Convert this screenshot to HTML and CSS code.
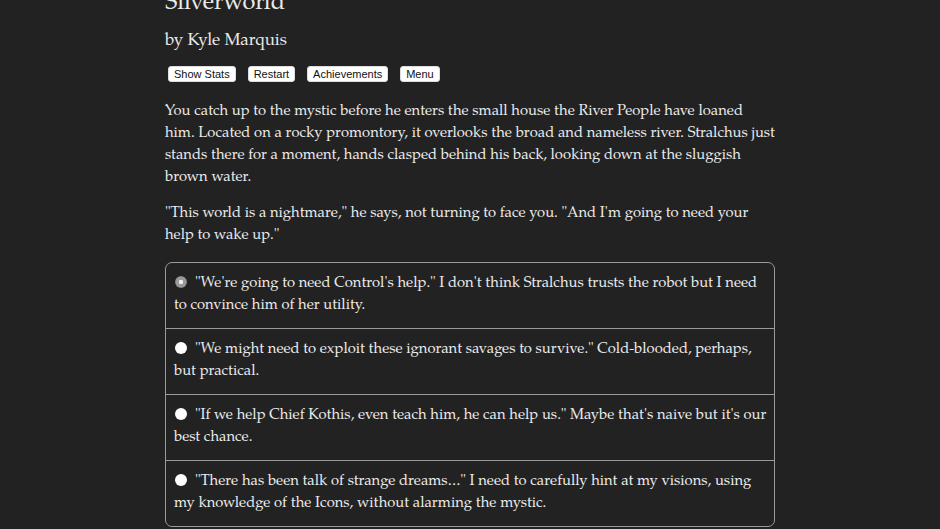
FILE: index.html
```html
<!DOCTYPE html>
<html>
<head>
<meta charset="utf-8">
<link rel="stylesheet" href="styles.css">
</head>
<body>
<div class="page">
  <h1 class="title">Silverworld</h1>
  <h2 class="author">by Kyle Marquis</h2>
  <div class="buttons">
    <button class="btn">Show Stats</button>
    <button class="btn">Restart</button>
    <button class="btn">Achievements</button>
    <button class="btn">Menu</button>
  </div>
  <p class="text">You catch up to the mystic before he enters the small house the River People have loaned him. Located on a rocky promontory, it overlooks the broad and nameless river. Stralchus just stands there for a moment, hands clasped behind his back, looking down at the sluggish brown water.</p>
  <p class="text">"This world is a nightmare," he says, not turning to face you. "And I'm going to need your help to wake up."</p>
  <div class="choices">
    <div class="choice"><span class="radio selected"></span>"We're going to need Control's help." I don't think Stralchus trusts the robot but I need to convince him of her utility.</div>
    <div class="choice"><span class="radio"></span>"We might need to exploit these ignorant savages to survive." Cold-blooded, perhaps, but practical.</div>
    <div class="choice"><span class="radio"></span>"If we help Chief Kothis, even teach him, he can help us." Maybe that's naive but it's our best chance.</div>
    <div class="choice"><span class="radio"></span>"There has been talk of strange dreams…" I need to carefully hint at my visions, using my knowledge of the Icons, without alarming the mystic.</div>
  </div>
</div>
</body>
</html>
```
FILE: styles.css
```css
html, body {
  margin: 0;
  padding: 0;
  background: #222222;
  height: 100%;
  overflow: hidden;
}
.page {
  width: 610px;
  margin-left: 165px;
  color: #ebebeb;
  font-family: "P052", "TeX Gyre Pagella", "URW Palladio L", "Palatino Linotype", Palatino, "Noto Serif", "DejaVu Serif", serif;
  font-size: 14.8px;
  line-height: 22px;
}
.title {
  margin: -11px 0 0 0;
  font-size: 23.5px;
  line-height: 30px;
  font-weight: normal;
}
.author {
  margin: 12px 0 0 0;
  font-size: 16.9px;
  line-height: 22px;
  font-weight: normal;
}
.buttons {
  display: flex;
  gap: 12px;
  margin: 13px 0 0 3px;
}
.btn {
  font-family: "Liberation Sans", sans-serif;
  font-size: 11px;
  line-height: 13px;
  padding: 1px 5px 0 5px;
  background: #fff;
  color: #111;
  border: 1px solid #ddd;
  border-radius: 3px;
}
.text {
  margin: 19px 0 0 0;
}
.text + .text {
  margin-top: 14px;
}
.choices {
  margin-top: 15px;
  border: 1px solid #9a9a9a;
  border-radius: 7px;
}
.choice {
  padding: 10px 6px 11px 8px;
  border-top: 1px solid #9a9a9a;
}
.choice:first-child {
  border-top: none;
}
.radio {
  display: inline-block;
  width: 12px;
  height: 12px;
  border-radius: 50%;
  background: #fff;
  margin: 0 8px 0 1px;
  vertical-align: -1px;
}
.radio.selected {
  background: radial-gradient(circle, #eee 0 2px, #999 2.5px 5px, #777 6px);
}
```
